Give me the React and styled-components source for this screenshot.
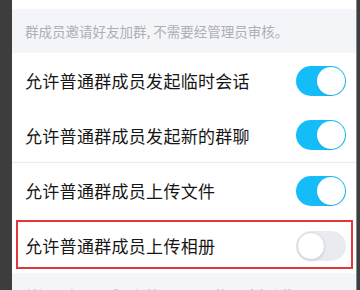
import React from 'react';
import styled, { createGlobalStyle, css } from 'styled-components';

const GlobalStyle = createGlobalStyle`
  html, body {
    margin: 0;
    padding: 0;
    background: #3d3d3d;
    overflow: hidden;
  }
  body {
    font-family: "Noto Sans CJK SC", "Noto Sans", sans-serif;
  }
`;

const rows = [
  { label: '允许普通群成员发起临时会话', on: true },
  { label: '允许普通群成员发起新的群聊', on: true, divider: true },
  { label: '允许普通群成员上传文件', on: true },
  { label: '允许普通群成员上传相册', on: false, marked: true },
];

export default function App() {
  return (
    <>
      <GlobalStyle />
      <Screen>
        <Panel>
          <TopGap />
          <Caption>群成员邀请好友加群, 不需要经管理员审核。</Caption>
          {rows.map(row => (
            <Row key={row.label} divider={row.divider} marked={row.marked}>
              <Label>{row.label}</Label>
              <Switch on={row.on}>
                <Knob on={row.on} />
              </Switch>
            </Row>
          ))}
          <Caption>关闭以上设置后，仅管理员可以使用对应功能</Caption>
        </Panel>
      </Screen>
    </>
  );
}

const Screen = styled.div`
  width: 360px;
  height: 290px;
  display: flex;
  padding-left: 12px;
  box-sizing: border-box;
  overflow: hidden;
`;

const Panel = styled.div`
  width: 344px;
  background: #fff;
  display: flex;
  flex-direction: column;
  border-right: 1px solid #8a8a8a;
`;

const TopGap = styled.div`
  height: 9px;
  flex: none;
`;

const Caption = styled.div`
  flex: none;
  height: 44px;
  box-sizing: border-box;
  padding: 0 13px;
  display: flex;
  align-items: center;
  background: #f4f5f9;
  color: #aeaeb6;
  font-size: 13.5px;
  white-space: nowrap;
`;

const Row = styled.div`
  flex: none;
  position: relative;
  height: 55px;
  box-sizing: border-box;
  padding: 0 10px 0 13px;
  display: flex;
  align-items: center;
  justify-content: space-between;
  ${p => p.divider && css`
    border-bottom: 1px solid #ebebef;
  `}
  ${p => p.marked && css`
    &::after {
      content: '';
      position: absolute;
      left: 4px;
      right: 3px;
      top: 2px;
      bottom: 4px;
      border: 2px solid #e2383d;
      pointer-events: none;
    }
  `}
`;

const Label = styled.span`
  font-size: 17px;
  color: #161616;
  letter-spacing: 0.3px;
`;

const Switch = styled.div`
  width: 50px;
  height: 30px;
  border-radius: 15px;
  box-sizing: border-box;
  padding: 1px;
  display: flex;
  justify-content: ${p => (p.on ? 'flex-end' : 'flex-start')};
  background: ${p => (p.on ? '#14bdf7' : '#e9ebf1')};
`;

const Knob = styled.div`
  width: 28px;
  height: 28px;
  border-radius: 50%;
  background: #fff;
  box-sizing: border-box;
  border: ${p => (p.on ? 'none' : '1px solid #dcdde3')};
  box-shadow: 0 1px 2px rgba(0, 0, 0, 0.12);
`;
